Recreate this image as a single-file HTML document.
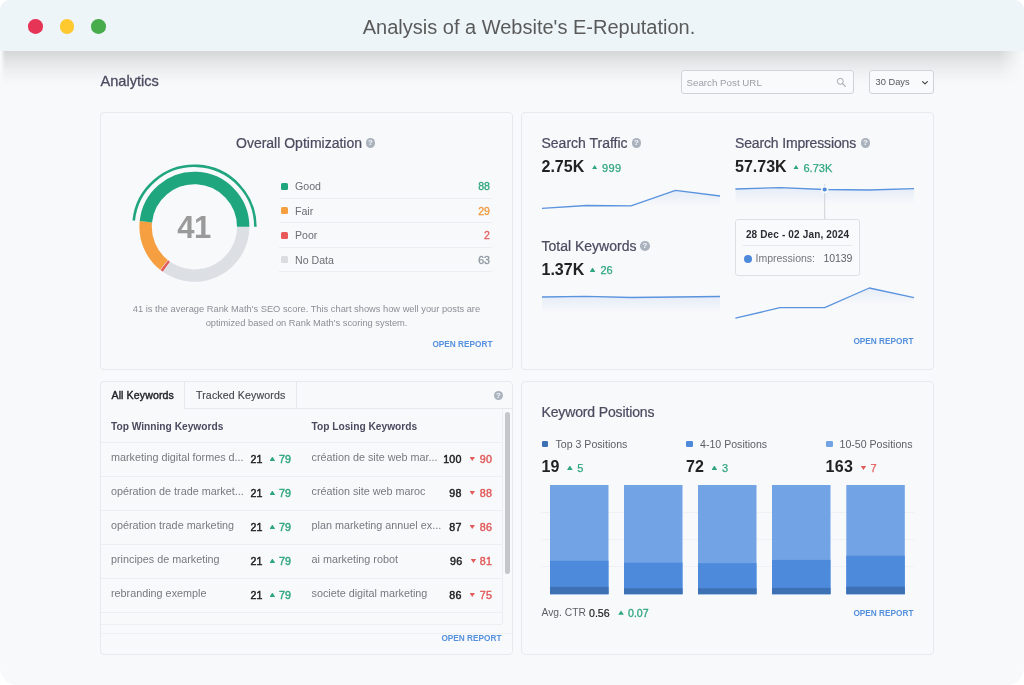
<!DOCTYPE html>
<html lang="en">
<head>
<meta charset="utf-8">
<title>Analysis of a Website's E-Reputation.</title>
<style>
*{box-sizing:border-box;margin:0;padding:0}
html,body{width:1024px;height:685px;overflow:hidden;background:#fff}
body{font-family:"Liberation Sans",sans-serif;position:relative;color:#4b4b60}
.win{position:absolute;left:0;top:0;width:1024px;height:685px;background:#f8f9fb;border-radius:10px 10px 17px 17px;overflow:hidden}
.bar{position:absolute;left:0;top:0;width:1024px;height:51px;background:#eef5f9;z-index:5}
.dot{position:absolute;top:19.4px;width:14.6px;height:14.6px;border-radius:50%}
.title{position:absolute;left:0;top:2px;width:1058px;text-align:center;line-height:51px;font-size:20px;color:#5a5a5a;white-space:nowrap}
.layer{position:absolute;left:0;top:0;width:1024px;height:685px;will-change:transform}
.abs{position:absolute;white-space:nowrap}
.panel{position:absolute;border:1px solid #e7e9ed;border-radius:4px}
.h{font-size:14px;color:#4b4b60;font-weight:400;-webkit-text-stroke:.22px #4b4b60}
.q{position:absolute;width:9.6px;height:9.6px;margin:-.3px;border-radius:50%;background:#aab3bd;color:#f8f9fb;font-size:7.8px;font-weight:700;line-height:9.8px;text-align:center}
.big{font-size:16px;font-weight:700;color:#222}
.tri-up{position:absolute;width:5.7px;height:4.4px;background:#2fa67c;clip-path:polygon(50% 0,100% 100%,0 100%)}
.tri-down{position:absolute;width:5.5px;height:4px;background:#e25c5c;clip-path:polygon(0 0,100% 0,50% 100%)}
.sm{font-size:11px;font-weight:400;-webkit-text-stroke:.25px currentColor;letter-spacing:.25px}
.open{font-size:8.25px;font-weight:700;color:#5590de;letter-spacing:0}
.lg{font-size:10.6px;color:#6b6e76}
.sq{position:absolute;width:7px;height:7px;border-radius:1.5px}
.ln{position:absolute;height:1px;background:#edeef1}
.kw{font-size:10.8px;color:#77797f}
.num{font-size:10.7px;color:#222;-webkit-text-stroke:.45px currentColor;letter-spacing:.15px}
.up{color:#2fa67c}.down{color:#e25c5c}
</style>
</head>
<body>
<div class="win">
<div class="layer">
  <div class="abs" style="left:1px;top:51px;width:1022px;height:36px;background:linear-gradient(to bottom,rgba(0,0,0,.138) 0,rgba(0,0,0,.085) 25%,rgba(0,0,0,.04) 55%,rgba(0,0,0,.01) 80%,rgba(0,0,0,0) 100%);-webkit-mask-image:linear-gradient(to right,transparent 0,#000 .4%,#000 97.6%,transparent 100%);mask-image:linear-gradient(to right,transparent 0,#000 .4%,#000 97.6%,transparent 100%)"></div>
  <div class="bar">
    <div class="dot" style="left:28.1px;background:#e53455"></div>
    <div class="dot" style="left:59.7px;background:#fdc92f"></div>
    <div class="dot" style="left:91.4px;background:#48ab4c"></div>
    <div class="title">Analysis of a Website's E-Reputation.</div>
  </div>

  <div class="abs" style="left:100.5px;top:72.7px;font-size:14.6px;color:#4b4b60;-webkit-text-stroke:.3px #4b4b60">Analytics</div>

  <!-- search -->
  <div class="abs" style="left:680.5px;top:70px;width:173.5px;height:23.5px;border:1px solid #cfd3d8;border-radius:3px;background:#f9fafb"></div>
  <div class="abs" style="left:686.5px;top:77px;font-size:9.75px;color:#9aa0a8">Search Post URL</div>
  <svg class="abs" style="left:836px;top:76.5px" width="11" height="11" viewBox="0 0 11 11"><circle cx="4.3" cy="4.3" r="3" fill="none" stroke="#a4a9b0" stroke-width="1"/><path d="M6.6 6.6L9.3 9.3" stroke="#a4a9b0" stroke-width="1.1" stroke-linecap="round"/></svg>
  <div class="abs" style="left:868.5px;top:70px;width:65.5px;height:23.5px;border:1px solid #cfd3d8;border-radius:3px;background:#f9fafb"></div>
  <div class="abs" style="left:875.5px;top:77px;font-size:9.3px;color:#555a60">30 Days</div>
  <svg class="abs" style="left:921px;top:79.5px" width="8" height="6" viewBox="0 0 8 6"><path d="M1.6 1.6L4 3.8L6.4 1.6" fill="none" stroke="#444" stroke-width="1.15" stroke-linecap="round" stroke-linejoin="round"/></svg>

  <!-- PANEL 1 -->
  <div class="panel" style="left:100px;top:112px;width:413px;height:258px"></div>
  <div class="abs h" style="left:236px;top:135px">Overall Optimization</div>
  <div class="q" style="left:366px;top:138.5px">?</div>

  <svg class="abs" style="left:124px;top:156px" width="140" height="140" viewBox="0 0 140 140">
    <g transform="translate(70.4,70.8)" fill="none">
      <!-- angles: 0deg = 3 o'clock, clockwise positive -->
      <path d="M48.80 0.00A48.8 48.8 0 0 1 -27.72 40.16" stroke="#dcdfe4" stroke-width="12.4"/>
      <path d="M-28.07 39.92A48.8 48.8 0 0 1 -30.10 38.41" stroke="#e25c5c" stroke-width="12.4"/>
      <path d="M-30.43 38.15A48.8 48.8 0 0 1 -48.54 -5.05" stroke="#f69f41" stroke-width="12.4"/>
      <path d="M-48.54 -5.05A48.8 48.8 0 0 1 48.80 0" stroke="#1fa67f" stroke-width="12.4"/>
      <path d="M-60.67 -6.31A61 61 0 0 1 61 0" stroke="#1fa67f" stroke-width="2.6"/>
    </g>
  </svg>
  <div class="abs" style="left:164px;top:210px;width:60px;text-align:center;font-size:31px;font-weight:700;color:#9a9a9a;line-height:36px;letter-spacing:-.5px">41</div>

  <div class="sq" style="left:281px;top:182.5px;background:#1fa67f"></div>
  <div class="abs lg" style="left:295px;top:180px">Good</div>
  <div class="abs lg" style="right:534px;top:180px;color:#2fa67c;-webkit-text-stroke:.3px #2fa67c">88</div>
  <div class="ln" style="left:279px;top:197.5px;width:213px"></div>
  <div class="sq" style="left:281px;top:207px;background:#f69f41"></div>
  <div class="abs lg" style="left:295px;top:204.5px">Fair</div>
  <div class="abs lg" style="right:534px;top:204.5px;color:#f0993e;-webkit-text-stroke:.3px #f0993e">29</div>
  <div class="ln" style="left:279px;top:222px;width:213px"></div>
  <div class="sq" style="left:281px;top:231.5px;background:#e9595c"></div>
  <div class="abs lg" style="left:295px;top:229px">Poor</div>
  <div class="abs lg" style="right:534px;top:229px;color:#e25c5c;-webkit-text-stroke:.3px #e25c5c">2</div>
  <div class="ln" style="left:279px;top:246.5px;width:213px"></div>
  <div class="sq" style="left:281px;top:256px;background:#d9dde2"></div>
  <div class="abs lg" style="left:295px;top:253.5px">No Data</div>
  <div class="abs lg" style="right:534px;top:253.5px;color:#8b949e;-webkit-text-stroke:.3px #8b949e">63</div>
  <div class="ln" style="left:279px;top:271px;width:213px"></div>

  <div class="abs" style="left:100px;top:302.2px;width:413px;text-align:center;font-size:9.3px;color:#8b8e95;line-height:14.2px;white-space:normal">41 is the average Rank Math's SEO score. This chart shows how well your posts are<br>optimized based on Rank Math's scoring system.</div>
  <div class="abs open" style="right:531.5px;top:340px">OPEN REPORT</div>

  <!-- PANEL 2 -->
  <div class="panel" style="left:521px;top:112px;width:413px;height:258px"></div>
  <div class="abs h" style="left:541.5px;top:135px">Search Traffic</div>
  <div class="q" style="left:632px;top:138.5px">?</div>
  <div class="abs big" style="left:541.5px;top:158px">2.75K</div>
  <div class="tri-up" style="left:591.8px;top:165px"></div>
  <div class="abs sm up" style="left:601.9px;top:161.8px;letter-spacing:.4px">999</div>

  <div class="abs h" style="left:735px;top:135px;letter-spacing:-.15px">Search Impressions</div>
  <div class="q" style="left:861px;top:138.5px">?</div>
  <div class="abs big" style="left:735px;top:158px">57.73K</div>
  <div class="tri-up" style="left:793.2px;top:165px"></div>
  <div class="abs sm up" style="left:803.5px;top:161.8px;letter-spacing:0">6.73K</div>

  <div class="abs h" style="left:541.5px;top:238px">Total Keywords</div>
  <div class="q" style="left:640.5px;top:241.5px">?</div>
  <div class="abs big" style="left:541.5px;top:260.5px">1.37K</div>
  <div class="tri-up" style="left:589.7px;top:267.5px"></div>
  <div class="abs sm up" style="left:600.5px;top:264.3px;letter-spacing:0">26</div>

  <svg class="abs" style="left:521px;top:112px" width="413" height="258" viewBox="521 112 413 258">
    <defs>
    <linearGradient id="g1" gradientUnits="userSpaceOnUse" x1="0" y1="190.3" x2="0" y2="207.3"><stop offset="0" stop-color="#4e8adb" stop-opacity=".105"/><stop offset="1" stop-color="#4e8adb" stop-opacity="0"/></linearGradient>
    <linearGradient id="g2" gradientUnits="userSpaceOnUse" x1="0" y1="187.6" x2="0" y2="204.6"><stop offset="0" stop-color="#4e8adb" stop-opacity=".105"/><stop offset="1" stop-color="#4e8adb" stop-opacity="0"/></linearGradient>
    <linearGradient id="g3" gradientUnits="userSpaceOnUse" x1="0" y1="296.4" x2="0" y2="313.4"><stop offset="0" stop-color="#4e8adb" stop-opacity=".105"/><stop offset="1" stop-color="#4e8adb" stop-opacity="0"/></linearGradient>
    <linearGradient id="g4" gradientUnits="userSpaceOnUse" x1="0" y1="288" x2="0" y2="305"><stop offset="0" stop-color="#4e8adb" stop-opacity=".105"/><stop offset="1" stop-color="#4e8adb" stop-opacity="0"/></linearGradient>
    </defs>
    <path d="M542 208.3L586.5 205.5L631 205.8L675.5 190.3L720 196L720 208.3L542 208.3Z" fill="url(#g1)"/>
    <path d="M542 208.3L586.5 205.5L631 205.8L675.5 190.3L720 196" fill="none" stroke="#5a93de" stroke-width="1.3" stroke-linejoin="round"/>
    <path d="M735.4 189L780 187.6L824.7 189.5L869.3 190L914 188.6L914 205.6L735.4 205.6Z" fill="url(#g2)"/>
    <path d="M735.4 189L780 187.6L824.7 189.5L869.3 190L914 188.6" fill="none" stroke="#5a93de" stroke-width="1.3" stroke-linejoin="round"/>
    <path d="M824.7 184V219.5" stroke="#cfd1d5" stroke-width="1"/>
    <circle cx="824.7" cy="189.5" r="3.7" fill="#f8f9fb"/>
    <circle cx="824.7" cy="189.5" r="2.1" fill="#4e8adb"/>
    <path d="M542 297L586.5 296.4L631 297.5L675.5 297L720 296.5L720 314.4L542 314.4Z" fill="url(#g3)"/>
    <path d="M542 297L586.5 296.4L631 297.5L675.5 297L720 296.5" fill="none" stroke="#5a93de" stroke-width="1.3" stroke-linejoin="round"/>
    <path d="M735.4 318.2L780 307.7L824.7 307.7L869.3 288L914 297.7L914 306L735.4 306Z" fill="url(#g4)"/>
    <path d="M735.4 318.2L780 307.7L824.7 307.7L869.3 288L914 297.7" fill="none" stroke="#5a93de" stroke-width="1.3" stroke-linejoin="round"/>
  </svg>

  <div class="abs" style="left:735px;top:219px;width:125px;height:56.5px;border:1px solid #dcdfe3;border-radius:3px;background:#f9fafb"></div>
  <div class="abs" style="left:735px;top:228.5px;width:125px;text-align:center;font-size:10px;font-weight:700;color:#2c2c34;letter-spacing:.15px">28 Dec - 02 Jan, 2024</div>
  <div class="ln" style="left:743px;top:244.5px;width:109px;background:#e6e8eb"></div>
  <div class="abs" style="left:743.5px;top:254.5px;width:8px;height:8px;border-radius:50%;background:#4e8adb"></div>
  <div class="abs" style="left:755.5px;top:252.3px;font-size:10.5px;color:#74777e">Impressions:</div>
  <div class="abs" style="right:171.8px;top:252.3px;font-size:10.5px;color:#5f6268;letter-spacing:-.1px">10139</div>
  <div class="abs open" style="right:110.5px;top:336.8px">OPEN REPORT</div>

  <!-- PANEL 3 -->
  <div class="panel" style="left:100px;top:381px;width:413px;height:273.5px"></div>
  <div class="abs" style="left:183.8px;top:381px;width:113px;height:28px;border:1px solid #e6e8ec;border-top:none"></div>
  <div class="ln" style="left:296px;top:408px;width:217px;background:#e6e8ec"></div>
  <div class="abs" style="left:111.5px;top:389px;font-size:10.6px;color:#1e1e24;-webkit-text-stroke:.4px #1e1e24;letter-spacing:.1px">All Keywords</div>
  <div class="abs" style="left:196px;top:389px;font-size:10.6px;color:#44464d;-webkit-text-stroke:.15px #44464d;letter-spacing:.13px">Tracked Keywords</div>
  <div class="q" style="left:494px;top:391px">?</div>

  <div class="abs" style="left:502px;top:409px;width:1px;height:215px;background:#ecedf0"></div>
  <div class="abs" style="left:505.2px;top:411.5px;width:4.8px;height:162px;border-radius:3px;background:#c5c6c9"></div>

  <div class="abs" style="left:111px;top:420.5px;font-size:10.2px;font-weight:700;color:#4b4b60">Top Winning Keywords</div>
  <div class="abs" style="left:311.5px;top:420.5px;font-size:10.2px;font-weight:700;color:#4b4b60">Top Losing Keywords</div>
  <div class="ln" style="left:101px;top:442px;width:401px"></div>
  <div class="ln" style="left:101px;top:476px;width:401px"></div>
  <div class="ln" style="left:101px;top:510px;width:401px"></div>
  <div class="ln" style="left:101px;top:544px;width:401px"></div>
  <div class="ln" style="left:101px;top:578px;width:401px"></div>
  <div class="ln" style="left:101px;top:612px;width:401px"></div>
  <div class="ln" style="left:101px;top:624px;width:401px;background:#eeeff2"></div>
  <div class="ln" style="left:101px;top:633px;width:411px;background:#eff0f3"></div>

  <div class="abs kw" style="left:111px;top:451.4px">marketing digital formes d...</div>
  <div class="abs kw" style="left:111px;top:485.4px">opération de trade market...</div>
  <div class="abs kw" style="left:111px;top:519.4px">opération trade marketing</div>
  <div class="abs kw" style="left:111px;top:553.4px">principes de marketing</div>
  <div class="abs kw" style="left:111px;top:587.4px">rebranding exemple</div>

  <div class="abs num" style="left:250.5px;top:453px">21</div><div class="tri-up" style="left:269.5px;top:456.5px"></div><div class="abs num up" style="left:279px;top:453px">79</div>
  <div class="abs num" style="left:250.5px;top:487px">21</div><div class="tri-up" style="left:269.5px;top:490.5px"></div><div class="abs num up" style="left:279px;top:487px">79</div>
  <div class="abs num" style="left:250.5px;top:521px">21</div><div class="tri-up" style="left:269.5px;top:524.5px"></div><div class="abs num up" style="left:279px;top:521px">79</div>
  <div class="abs num" style="left:250.5px;top:555px">21</div><div class="tri-up" style="left:269.5px;top:558.5px"></div><div class="abs num up" style="left:279px;top:555px">79</div>
  <div class="abs num" style="left:250.5px;top:589px">21</div><div class="tri-up" style="left:269.5px;top:592.5px"></div><div class="abs num up" style="left:279px;top:589px">79</div>

  <div class="abs kw" style="left:311.5px;top:451.4px">création de site web mar...</div>
  <div class="abs kw" style="left:311.5px;top:485.4px">création site web maroc</div>
  <div class="abs kw" style="left:311.5px;top:519.4px">plan marketing annuel ex...</div>
  <div class="abs kw" style="left:311.5px;top:553.4px">ai marketing robot</div>
  <div class="abs kw" style="left:311.5px;top:587.4px">societe digital marketing</div>

  <div class="abs num" style="right:562.5px;top:453px">100</div><div class="tri-down" style="left:469.5px;top:457.1px"></div><div class="abs num down" style="right:532px;top:453px">90</div>
  <div class="abs num" style="right:562.5px;top:487px">98</div><div class="tri-down" style="left:469.5px;top:491.1px"></div><div class="abs num down" style="right:532px;top:487px">88</div>
  <div class="abs num" style="right:562.5px;top:521px">87</div><div class="tri-down" style="left:469.5px;top:525.1px"></div><div class="abs num down" style="right:532px;top:521px">86</div>
  <div class="abs num" style="right:561.7px;top:555px">96</div><div class="tri-down" style="left:470.7px;top:559.1px"></div><div class="abs num down" style="right:532px;top:555px">81</div>
  <div class="abs num" style="right:562.5px;top:589px">86</div><div class="tri-down" style="left:469.5px;top:593.1px"></div><div class="abs num down" style="right:532px;top:589px">75</div>

  <div class="abs open" style="right:522.5px;top:633.5px">OPEN REPORT</div>

  <!-- PANEL 4 -->
  <div class="panel" style="left:521px;top:381px;width:413px;height:273.5px"></div>
  <div class="abs h" style="left:541.5px;top:403.5px;letter-spacing:-.14px">Keyword Positions</div>

  <div class="sq" style="left:541.5px;top:440.6px;width:6.7px;height:6.7px;border-radius:1.2px;background:#3e70b4"></div>
  <div class="abs lg" style="left:555.5px;top:437.5px;color:#5c5f66">Top 3 Positions</div>
  <div class="sq" style="left:686px;top:440.6px;width:6.7px;height:6.7px;border-radius:1.2px;background:#4e8adb"></div>
  <div class="abs lg" style="left:700px;top:437.5px;color:#5c5f66">4-10 Positions</div>
  <div class="sq" style="left:826px;top:440.6px;width:6.7px;height:6.7px;border-radius:1.2px;background:#72a3e5"></div>
  <div class="abs lg" style="left:839.5px;top:437.5px;color:#5c5f66">10-50 Positions</div>

  <div class="abs big" style="left:541.5px;top:457.5px">19</div>
  <div class="tri-up" style="left:567px;top:465.5px"></div>
  <div class="abs sm up" style="left:577.3px;top:462px">5</div>
  <div class="abs big" style="left:686px;top:457.5px">72</div>
  <div class="tri-up" style="left:711.5px;top:465.5px"></div>
  <div class="abs sm up" style="left:722px;top:462px">3</div>
  <div class="abs big" style="left:825.5px;top:457.5px;letter-spacing:.3px">163</div>
  <div class="tri-down" style="left:860.7px;top:465.9px"></div>
  <div class="abs sm down" style="left:870.5px;top:462px">7</div>

  <svg class="abs" style="left:540px;top:480px" width="380" height="120" viewBox="540 480 380 120">
    <path d="M541 512.5H914M541 539.5H914M541 566.5H914" stroke="#f0f1f4" stroke-width="1"/>
    <g>
      <rect x="550" y="485" width="58.5" height="109.2" fill="#72a3e5"/><rect x="550" y="560.8" width="58.5" height="33.4" fill="#4e8adb"/><rect x="550" y="586.9" width="58.5" height="7.3" fill="#3e70b4"/>
      <rect x="624" y="485" width="58.5" height="109.2" fill="#72a3e5"/><rect x="624" y="562.7" width="58.5" height="31.5" fill="#4e8adb"/><rect x="624" y="588.3" width="58.5" height="5.9" fill="#3e70b4"/>
      <rect x="698" y="485" width="58.5" height="109.2" fill="#72a3e5"/><rect x="698" y="563.2" width="58.5" height="31" fill="#4e8adb"/><rect x="698" y="588.3" width="58.5" height="5.9" fill="#3e70b4"/>
      <rect x="772" y="485" width="58.5" height="109.2" fill="#72a3e5"/><rect x="772" y="559.9" width="58.5" height="34.3" fill="#4e8adb"/><rect x="772" y="587.9" width="58.5" height="6.3" fill="#3e70b4"/>
      <rect x="846.3" y="485" width="58.5" height="109.2" fill="#72a3e5"/><rect x="846.3" y="555.7" width="58.5" height="38.5" fill="#4e8adb"/><rect x="846.3" y="586.7" width="58.5" height="7.5" fill="#3e70b4"/>
    </g>
  </svg>

  <div class="abs lg" style="left:541.5px;top:606.5px;font-size:10.3px;color:#5c5f66">Avg. CTR</div>
  <div class="abs lg" style="left:589px;top:606.5px;color:#222;-webkit-text-stroke:.2px #222">0.56</div>
  <div class="tri-up" style="left:618.2px;top:610.4px"></div>
  <div class="abs lg up" style="left:628px;top:606.5px;color:#2fa67c;-webkit-text-stroke:.3px #2fa67c">0.07</div>
  <div class="abs open" style="right:110.5px;top:608.8px">OPEN REPORT</div>
</div>
</div>
</body>
</html>
